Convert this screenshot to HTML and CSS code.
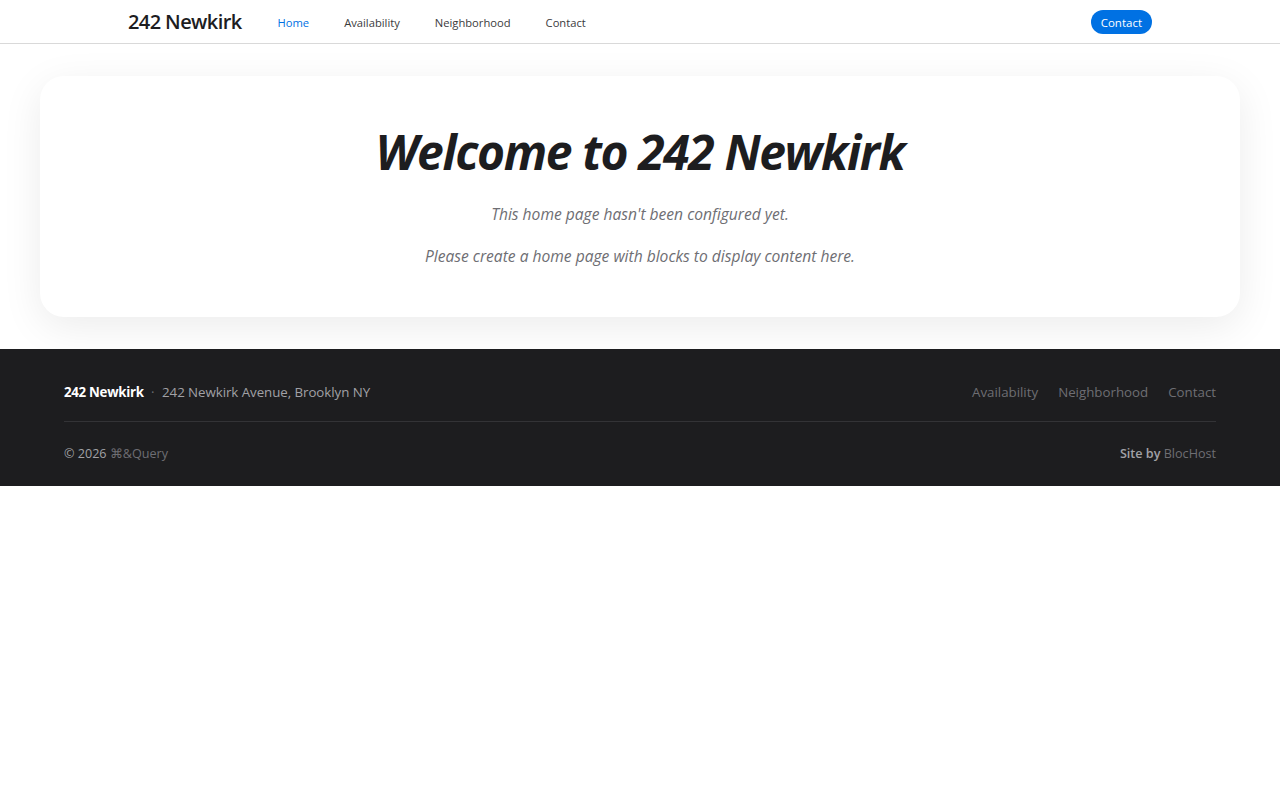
FILE: index.html
```html
<!DOCTYPE html>
<html lang="en">
<head>
<meta charset="utf-8">
<title>242 Newkirk</title>
<link rel="stylesheet" href="styles.css">
</head>
<body>
<header class="site-header">
  <div class="header-inner">
    <a class="brand" href="#">242 Newkirk</a>
    <nav class="main-nav">
      <a class="nav-link active" href="#">Home</a>
      <a class="nav-link" href="#">Availability</a>
      <a class="nav-link" href="#">Neighborhood</a>
      <a class="nav-link" href="#">Contact</a>
    </nav>
    <a class="cta" href="#">Contact</a>
  </div>
</header>
<main class="main">
  <section class="card">
    <h1 class="title">Welcome to 242 Newkirk</h1>
    <p class="note">This home page hasn't been configured yet.</p>
    <p class="note">Please create a home page with blocks to display content here.</p>
  </section>
</main>
<footer class="site-footer">
  <div class="footer-top">
    <div class="footer-info">
      <strong class="footer-brand">242 Newkirk</strong>
      <span class="dot">·</span>
      <span class="address">242 Newkirk Avenue, Brooklyn NY</span>
    </div>
    <nav class="footer-nav">
      <a href="#">Availability</a>
      <a href="#">Neighborhood</a>
      <a href="#">Contact</a>
    </nav>
  </div>
  <div class="footer-bottom">
    <span class="copy">© 2026 <a href="#">⌘&amp;Query</a></span>
    <span class="siteby"><span class="siteby-label">Site by</span> <a href="#">BlocHost</a></span>
  </div>
</footer>
</body>
</html>
```
FILE: styles.css
```css
* { box-sizing: border-box; }
html, body { margin: 0; padding: 0; }
body {
  font-family: "Open Sans", "Noto Sans", sans-serif;
  background: #fff;
  color: #1d1d1f;
}
a { text-decoration: none; color: inherit; }

.site-header {
  height: 44px;
  border-bottom: 1px solid #d9d9d9;
}
.header-inner {
  width: 1024px;
  margin: 0 auto;
  height: 43px;
  display: flex;
  align-items: center;
}
.brand {
  font-size: 20px;
  font-weight: 600;
  color: #1d1d1f;
  letter-spacing: -0.6px;
}
.main-nav {
  display: flex;
  gap: 35px;
  margin-left: 36px;
  padding-top: 2px;
}
.nav-link {
  font-size: 11.2px;
  color: #3a3a3c;
}
.nav-link.active { color: #0071e3; }
.cta {
  margin-left: auto;
  background: #0071e3;
  color: #fff;
  font-size: 11.5px;
  height: 24px;
  line-height: 25px;
  padding: 0 10px;
  border-radius: 12px;
}

.main {
  padding: 32px 40px;
}
.card {
  background: #fff;
  border-radius: 24px;
  box-shadow: 0 10px 40px rgba(0,0,0,0.08);
  padding: 42px 40px 49px;
  text-align: center;
}
.title {
  margin: 0 0 16px;
  font-size: 48px;
  font-weight: 700;
  font-style: italic;
  line-height: 68px;
  color: #1d1d1f;
  letter-spacing: -1.4px;
}
.note {
  margin: 0 0 18px;
  font-size: 15.6px;
  line-height: 24px;
  font-style: italic;
  color: #6e6e73;
}
.note:last-child { margin-bottom: 0; }

.site-footer {
  background: #1d1d1f;
  padding: 33px 64px 22px;
  font-size: 13.3px;
}
.footer-top {
  display: flex;
  justify-content: space-between;
  align-items: center;
  height: 40px;
  padding-bottom: 20px;
  border-bottom: 1px solid #333336;
  line-height: 20px;
}
.footer-brand { color: #fff; font-weight: 700; letter-spacing: -0.3px; }
.dot { color: #6e6e73; margin: 0 4px; }
.address { color: #a1a1a6; letter-spacing: -0.05px; }
.footer-nav { display: flex; gap: 20px; }
.footer-nav a { color: #6e6e73; }
.footer-bottom {
  display: flex;
  justify-content: space-between;
  align-items: center;
  padding-top: 22px;
  line-height: 20px;
  font-size: 12.6px;
  color: #a1a1a6;
}
.siteby-label { font-weight: 600; }
.footer-bottom a { color: #6e6e73; }
```
